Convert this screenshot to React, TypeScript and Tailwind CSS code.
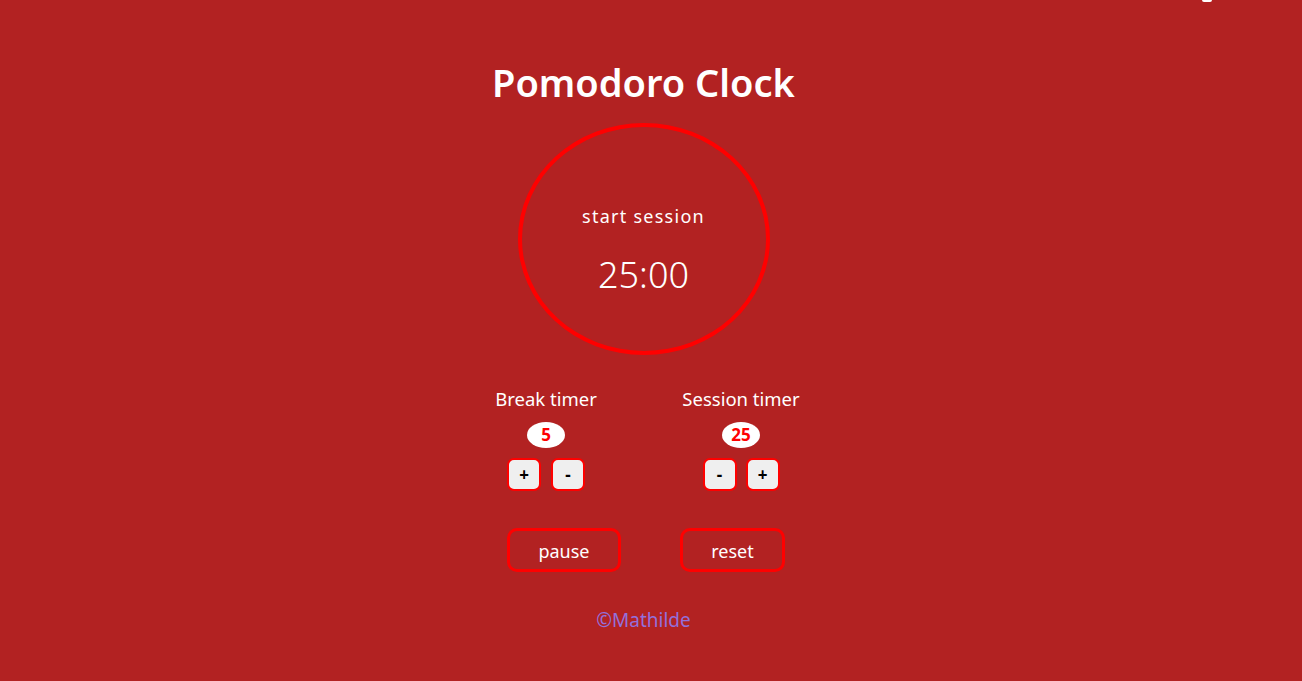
import { useState } from 'react';

export default function App() {
  const [breakLen, setBreakLen] = useState(5);
  const [sessionLen, setSessionLen] = useState(25);

  const btn =
    'box-border flex h-[33px] w-[34px] shrink-0 items-center justify-center rounded-[7px] border-2 border-[#ff0000] bg-[#efefef] text-[17px] font-bold leading-none text-black';

  return (
    <div className="relative flex min-h-[681px] w-full flex-col items-center bg-[#b22222] pr-[15px] font-['Noto_Sans','Open_Sans',sans-serif] text-white">
      {/* bit of something cut off at the top edge */}
      <span className="absolute right-[90px] top-0 h-[2px] w-[10px] rounded-b-full bg-white" />

      <h1 className="mt-[60px] text-[38px] font-semibold leading-[44px]">Pomodoro Clock</h1>

      {/* Таймер */}
      <div className="mt-[19px] flex h-[232px] w-[252px] flex-col items-center rounded-[50%] border-4 border-[#ff0000]">
        <p className="mt-[77px] text-[18px] leading-[24px] tracking-[0.07em]">start session</p>
        <p className="mt-[25px] text-[36px] font-light leading-[44px]">25:00</p>
      </div>

      {/* Настройки */}
      <div className="mt-[31px] flex gap-[45px]">
        <div className="flex w-[150px] flex-col items-center">
          <p className="text-[18.5px] leading-[26px]">Break timer</p>
          <span className="mt-[10px] flex h-[26px] w-[38px] items-center justify-center rounded-[50%] bg-white text-[17px] font-bold text-[#ff0000]">
            {breakLen}
          </span>
          <div className="mt-[10px] flex gap-[10px]">
            <button className={btn} onClick={() => setBreakLen(breakLen + 1)}>+</button>
            <button className={btn} onClick={() => setBreakLen(Math.max(1, breakLen - 1))}>-</button>
          </div>
        </div>
        <div className="flex w-[150px] flex-col items-center">
          <p className="text-[18.5px] leading-[26px]">Session timer</p>
          <span className="mt-[10px] flex h-[26px] w-[38px] items-center justify-center rounded-[50%] bg-white text-[17px] font-bold text-[#ff0000]">
            {sessionLen}
          </span>
          <div className="mt-[10px] flex gap-[9px]">
            <button className={btn} onClick={() => setSessionLen(Math.max(1, sessionLen - 1))}>-</button>
            <button className={btn} onClick={() => setSessionLen(sessionLen + 1)}>+</button>
          </div>
        </div>
      </div>

      <div className="ml-[5px] mt-[37px] flex gap-[59px]">
        <button className="h-[44px] w-[114px] rounded-[10px] border-[3px] border-[#ff0000] pt-[2px] text-[18px] text-white">pause</button>
        <button className="h-[44px] w-[105px] rounded-[10px] border-[3px] border-[#ff0000] pt-[2px] text-[18px] text-white">reset</button>
      </div>

      <p className="mt-[35px] text-[19px] leading-[26px] text-[#9370db]">©Mathilde</p>
    </div>
  );
}
